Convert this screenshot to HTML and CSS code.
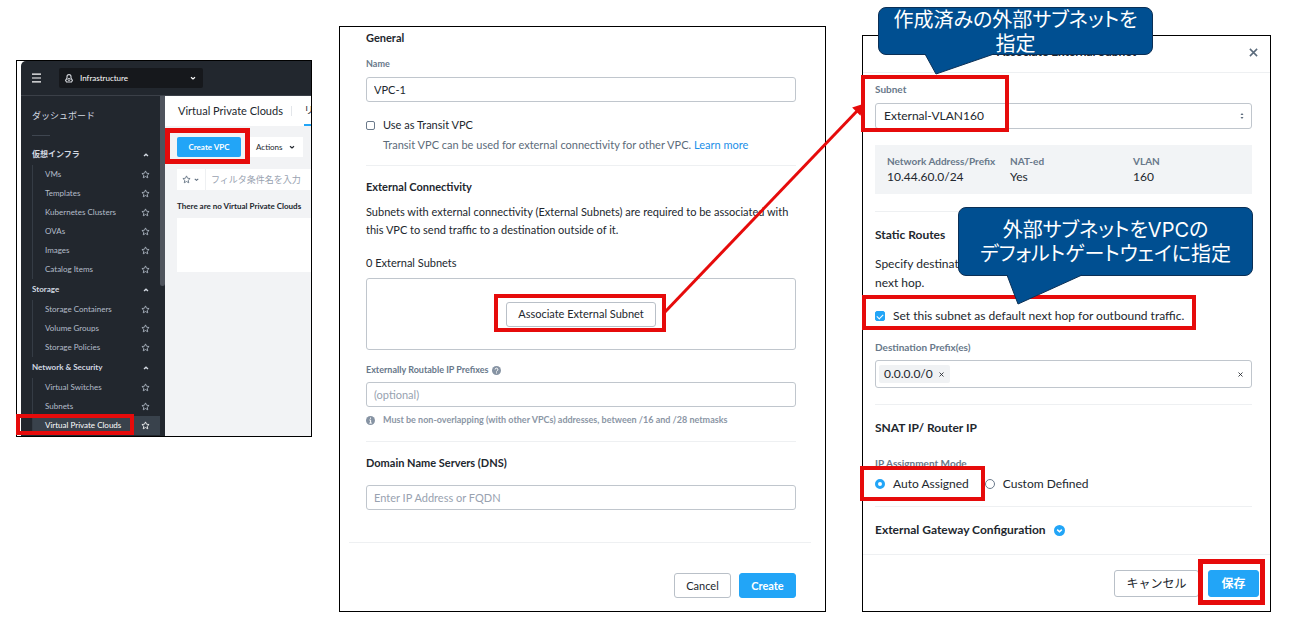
FILE: index.html
```html
<!DOCTYPE html>
<html lang="ja">
<head>
  <meta charset="UTF-8" />
  <meta name="viewport" content="width=device-width, initial-scale=1" />
  <title>VPC の作成手順</title>
  <link rel="stylesheet" href="styles.css">
</head>
<body>
  <svg width="0" height="0" class="sprite" aria-hidden="true">
    <symbol id="star" viewBox="0 0 12 12">
      <path d="M6 1.2 7.4 4.3 10.8 4.7 8.3 7 9 10.4 6 8.7 3 10.4 3.7 7 1.2 4.7 4.6 4.3Z" fill="none" stroke="currentColor" stroke-width="1.1" stroke-linejoin="round"/>
    </symbol>
    <symbol id="up" viewBox="0 0 8 8">
      <path d="M2 5 4 3.2 6 5" fill="none" stroke="currentColor" stroke-width="1.3"/>
    </symbol>
    <symbol id="down" viewBox="0 0 8 8">
      <path d="M2 3.2 4 5 6 3.2" fill="none" stroke="currentColor" stroke-width="1.2"/>
    </symbol>
    <symbol id="cross" viewBox="0 0 10 10">
      <path d="M1 1 9 9M9 1 1 9" fill="none" stroke="currentColor" stroke-width="1.7"/>
    </symbol>
  </svg>

  <main class="board">
    <!-- Step 1: VPC list -->
    <section class="panel panel-list">
      <div class="app">
        <header class="topbar">
          <button class="icon-btn" aria-label="メニュー">
            <svg width="10" height="10" viewBox="0 0 10 10"><path d="M0 1.2h9M0 5h9M0 8.8h9" stroke="#fff" stroke-width="1.2"/></svg>
          </button>
          <div class="app-switch">
            <svg width="8" height="9" viewBox="0 0 8 9"><path d="M2 4V2.6a2 2 0 0 1 4 0V4l1.4 2.4-.9 1.6h-5L.6 6.4Z" fill="none" stroke="#d5d8dd" stroke-width="1.1"/><circle cx="4" cy="5.4" r="1.1" fill="none" stroke="#d5d8dd"/></svg>
            <select aria-label="アプリ"><option>Infrastructure</option></select>
            <svg class="caret" width="8" height="8"><use href="#down"/></svg>
          </div>
        </header>
        <div class="app-body">
          <nav class="sidebar">
            <div class="side-in">
              <a class="dash" href="#">ダッシュボード</a>
              <hr>
              <h2>仮想インフラ <svg width="8" height="8"><use href="#up"/></svg></h2>
              <ul>
                <li><a href="#">VMs</a><svg width="9" height="9"><use href="#star"/></svg></li>
                <li><a href="#">Templates</a><svg width="9" height="9"><use href="#star"/></svg></li>
                <li><a href="#">Kubernetes Clusters</a><svg width="9" height="9"><use href="#star"/></svg></li>
                <li><a href="#">OVAs</a><svg width="9" height="9"><use href="#star"/></svg></li>
                <li><a href="#">Images</a><svg width="9" height="9"><use href="#star"/></svg></li>
                <li><a href="#">Catalog Items</a><svg width="9" height="9"><use href="#star"/></svg></li>
              </ul>
              <h2>Storage <svg width="8" height="8"><use href="#up"/></svg></h2>
              <ul>
                <li><a href="#">Storage Containers</a><svg width="9" height="9"><use href="#star"/></svg></li>
                <li><a href="#">Volume Groups</a><svg width="9" height="9"><use href="#star"/></svg></li>
                <li><a href="#">Storage Policies</a><svg width="9" height="9"><use href="#star"/></svg></li>
              </ul>
              <h2>Network &amp; Security <svg width="8" height="8"><use href="#up"/></svg></h2>
              <ul>
                <li><a href="#">Virtual Switches</a><svg width="9" height="9"><use href="#star"/></svg></li>
                <li><a href="#">Subnets</a><svg width="9" height="9"><use href="#star"/></svg></li>
                <li class="active"><a href="#">Virtual Private Clouds</a><svg width="9" height="9"><use href="#star"/></svg><span class="mark mark-menu"></span></li>
              </ul>
            </div>
            <div class="side-scroll"></div>
          </nav>
          <div class="list">
            <div class="list-head">
              <h1>Virtual Private Clouds</h1>
              <span class="sep"></span>
              <a class="tab" href="#">リ</a>
            </div>
            <div class="toolbar">
              <div class="target">
                <button class="btn-create">Create VPC</button>
                <span class="mark mark-create"></span>
              </div>
              <button class="btn-actions">Actions <svg width="8" height="8"><use href="#down"/></svg></button>
            </div>
            <div class="filter">
              <button class="filter-star" aria-label="保存済みフィルタ"><svg width="9" height="9"><use href="#star"/></svg><svg width="7" height="7"><use href="#down"/></svg></button>
              <input type="text" placeholder="フィルタ条件名を入力" aria-label="フィルタ">
            </div>
            <p class="empty-title">There are no Virtual Private Clouds</p>
            <div class="empty-box"></div>
          </div>
        </div>
      </div>
    </section>

    <!-- Step 2: create VPC form -->
    <section class="panel panel-form">
      <div class="form-body">
        <h3>General</h3>
        <label class="label" for="vpc-name">Name</label>
        <input class="input" id="vpc-name" type="text" value="VPC-1">
        <div class="check">
          <input type="checkbox" id="transit">
          <label for="transit">Use as Transit VPC</label>
        </div>
        <p class="note">Transit VPC can be used for external connectivity for other VPC. <a href="#">Learn more</a></p>
        <hr>
        <h3>External Connectivity</h3>
        <p class="text">Subnets with external connectivity (External Subnets) are required to be associated with<br>this VPC to send traffic to a destination outside of it.</p>
        <p class="count">0 External Subnets</p>
        <div class="subnet-box">
          <div class="target">
            <button class="btn btn-associate">Associate External Subnet</button>
            <span class="mark mark-associate"></span>
            <svg class="arrow" width="210" height="220" viewBox="0 0 210 220">
              <path d="M4 213 198 10" stroke="#e60b0b" stroke-width="3"/>
              <path d="M203 5 200 14 194 8Z" fill="#e60b0b" stroke="#e60b0b" stroke-width="2"/>
            </svg>
          </div>
        </div>
        <label class="label label-prefix" for="prefixes">Externally Routable IP Prefixes
          <svg width="9" height="9" viewBox="0 0 9 9"><circle cx="4.5" cy="4.5" r="4.5" fill="#8693a3"/><path d="M3.1 3.5a1.4 1.4 0 1 1 2 1.3q-.6.3-.6.8M4.5 6.4v1" fill="none" stroke="#fff"/></svg>
        </label>
        <input class="input" id="prefixes" type="text" placeholder="(optional)">
        <p class="hint">
          <svg width="9" height="9" viewBox="0 0 9 9"><circle cx="4.5" cy="4.5" r="4.5" fill="#8693a3"/><path d="M4.5 1.6v1.2M3.4 4h1.2v3M3.3 7.1h2.5" fill="none" stroke="#fff"/></svg>
          Must be non-overlapping (with other VPCs) addresses, between /16 and /28 netmasks
        </p>
        <hr>
        <h3><label for="dns">Domain Name Servers (DNS)</label></h3>
        <input class="input input-dns" id="dns" type="text" placeholder="Enter IP Address or FQDN">
      </div>
      <footer class="form-foot">
        <button class="btn">Cancel</button>
        <button class="btn btn-primary">Create</button>
      </footer>
    </section>

    <!-- Step 3: associate external subnet dialog -->
    <section class="panel panel-dialog">
      <header class="dialog-head">
        <h3>Associate External Subnet</h3>
        <button class="icon-btn close" aria-label="閉じる"><svg width="9" height="9"><use href="#cross"/></svg></button>
      </header>
      <div class="dialog-body">
        <div class="target field">
          <label class="label" for="subnet">Subnet</label>
          <div class="select">
            <select class="input" id="subnet"><option>External-VLAN160</option></select>
            <svg width="6" height="10" viewBox="0 0 6 10"><path d="M1.5 4 3 2 4.5 4ZM1.5 6 3 8 4.5 6Z" fill="#5b6b7c"/></svg>
          </div>
          <span class="mark mark-subnet"></span>
        </div>
        <dl class="info">
          <div><dt>Network Address/Prefix</dt><dd>10.44.60.0/24</dd></div>
          <div><dt>NAT-ed</dt><dd>Yes</dd></div>
          <div><dt>VLAN</dt><dd>160</dd></div>
        </dl>
        <hr>
        <h3>Static Routes</h3>
        <p class="text">Specify destination<br>next hop.</p>
        <div class="check target">
          <input type="checkbox" id="default-hop" checked>
          <label for="default-hop">Set this subnet as default next hop for outbound traffic.</label>
          <span class="mark mark-hop"></span>
        </div>
        <label class="label" for="dest">Destination Prefix(es)</label>
        <div class="tags">
          <span class="tag">0.0.0.0/0 <button class="icon-btn" aria-label="削除"><svg width="5" height="5"><use href="#cross"/></svg></button></span>
          <input type="text" id="dest">
          <button class="icon-btn" aria-label="クリア"><svg width="5" height="5"><use href="#cross"/></svg></button>
        </div>
        <hr>
        <h3>SNAT IP/ Router IP</h3>
        <p class="label label-mode" id="mode">IP Assignment Mode</p>
        <div class="radios" role="radiogroup" aria-labelledby="mode">
          <div class="radio target">
            <input type="radio" name="mode" id="auto" checked>
            <label for="auto">Auto Assigned</label>
            <span class="mark mark-auto"></span>
          </div>
          <div class="radio">
            <input type="radio" name="mode" id="custom">
            <label for="custom">Custom Defined</label>
          </div>
        </div>
        <hr>
        <h3 class="expand">External Gateway Configuration
          <button class="icon-btn" aria-label="展開"><svg width="11" height="11" viewBox="0 0 11 11"><circle cx="5.5" cy="5.5" r="5.5" fill="#22a5f7"/><path d="M3.2 4.6 5.5 6.8 7.8 4.6" fill="none" stroke="#fff" stroke-width="1.5"/></svg></button>
        </h3>
      </div>
      <footer class="dialog-foot">
        <button class="btn btn-cancel">キャンセル</button>
        <div class="target">
          <button class="btn btn-primary">保存</button>
          <span class="mark mark-save"></span>
        </div>
      </footer>

      <div class="callout callout-subnet">
        作成済みの外部サブネットを<br>指定
        <svg width="72" height="22" viewBox="0 0 72 22"><path d="M0 0 11 20 69 0" fill="#004f91" stroke="#0b2f55"/></svg>
      </div>
      <div class="callout callout-gateway">
        外部サブネットをVPCの<br>デフォルトゲートウェイに指定
        <svg width="78" height="32" viewBox="0 0 78 32"><path d="M0 0 11 29 75 0" fill="#004f91" stroke="#0b2f55"/></svg>
      </div>
    </section>
  </main>
</body>
</html>
```

FILE: styles.css
```css
* {
  box-sizing: border-box;
  margin: 0;
  padding: 0;
}

body {
  background: #fff;
  color: #22272e;
  font-family: Lato, "Noto Sans CJK JP", sans-serif;
  font-size: 11px;
  line-height: 16px;
}

button,
input,
select {
  font: inherit;
  color: inherit;
}

button {
  cursor: pointer;
  white-space: nowrap;
}

a {
  color: #1b8fe8;
  text-decoration: none;
}

svg {
  flex-shrink: 0;
}

hr {
  border: none;
  border-top: 1px solid #eef0f2;
}

ul {
  list-style: none;
}

h3 {
  font-size: inherit;
  font-weight: bold;
}

.sprite {
  position: absolute;
}

.board {
  display: grid;
  grid-template-columns: 296fr 514fr 445fr;
  align-items: start;
  padding: 26px 19px 6px 16px;
}

.panel {
  position: relative;
  min-width: 0;
  border: 1px solid #000;
  background: #fff;
}

.panel-list {
  margin-top: 34px;
}

.panel-form {
  margin-left: 27px;
}

.panel-dialog {
  margin: 9px 0 0 36px;
  font-size: 12px;
}

.target {
  position: relative;
}

.icon-btn {
  display: flex;
  border: none;
  background: none;
}

/* red frames around the things to click */
.mark {
  position: absolute;
  z-index: 2;
  border: 4px solid #e60b0b;
  pointer-events: none;
}

.mark-menu { left: -17px; top: -2px; width: 118px; height: 21px; }
.mark-create { inset: -9px -9px -7px -12px; border-width: 5px; }
.mark-associate { inset: -8px -10px -5px -12px; }
.mark-subnet { left: -14px; top: -7px; width: 148px; height: 57px; }
.mark-hop { left: -13px; top: -13px; width: 334px; height: 35px; }
.mark-auto { left: -15px; top: -10px; width: 125px; height: 35px; }
.mark-save { inset: -11px -6px -8px -10px; border-width: 5px; }

/* VPC list */
.app {
  margin-left: 4px;
  font-size: 8px;
}

.topbar {
  display: flex;
  align-items: center;
  gap: 17px;
  height: 35px;
  padding-left: 11px;
  border-bottom: 1px solid #3b4048;
  border-radius: 5px 0 0 0;
  background: #22272e;
}

.app-switch {
  position: relative;
  display: flex;
  align-items: center;
  gap: 7px;
  width: 144px;
  height: 20px;
  padding: 0 6px;
  border-radius: 2px;
  background: #16181c;
  color: #fff;
}

.app-switch select {
  flex: 1;
  border: none;
  appearance: none;
  background: transparent;
}

.app-body {
  display: flex;
}

.sidebar {
  display: flex;
  width: 144px;
  flex-shrink: 0;
  background: #22272e;
  color: #b4bdca;
}

.sidebar a {
  color: inherit;
}

.side-in {
  flex: 1;
  padding: 12px 0 1px 11px;
}

.side-in hr {
  width: 18px;
  margin: 11px 0 8px;
  border-color: #3f4650;
}

.side-in .dash {
  display: block;
  font-size: 9px;
  color: #d3d9e2;
}

.side-in h2 {
  display: flex;
  align-items: center;
  justify-content: space-between;
  padding-right: 10px;
  font-size: 8px;
  font-weight: bold;
  line-height: 21px;
  color: #d3d9e2;
}

.side-in ul {
  border-left: 1px solid #353c45;
}

.side-in li {
  position: relative;
  display: flex;
  align-items: center;
  justify-content: space-between;
  padding: 0 10px 0 12px;
  line-height: 19px;
}

.side-in li.active {
  background: #39424c;
  color: #fff;
}

.side-scroll {
  width: 5px;
  height: 190px;
  border-radius: 0 0 3px 3px;
  background: #4f545d;
}

.list {
  flex: 1;
  min-width: 0;
  background: #f2f3f5;
}

.list-head {
  display: flex;
  height: 30px;
  padding-left: 13px;
  overflow: hidden;
  background: #fff;
  white-space: nowrap;
}

.list-head h1 {
  font-size: 11px;
  font-weight: normal;
  line-height: 30px;
}

.sep {
  width: 1px;
  height: 10px;
  margin: 10px 12px 0 8px;
  flex-shrink: 0;
  background: #e3e6ea;
}

.tab {
  border-bottom: 2px solid #22a5f7;
  font-size: 10px;
  line-height: 28px;
  color: #22272e;
}

.toolbar {
  display: flex;
  gap: 8px;
  padding: 11px 7px 0 12px;
}

.btn-create {
  width: 64px;
  height: 20px;
  border: none;
  border-radius: 2px;
  background: #22a5f7;
  color: #fff;
  font-weight: bold;
}

.btn-actions {
  display: flex;
  align-items: center;
  gap: 5px;
  height: 20px;
  padding: 0 7px;
  border: none;
  background: #fff;
}

.filter {
  display: flex;
  height: 21px;
  margin: 12px 0 0 12px;
  background: #fff;
}

.filter-star {
  display: flex;
  align-items: center;
  gap: 2px;
  padding: 0 5px;
  border: none;
  border-right: 1px solid #eef0f2;
  background: none;
  color: #5b6b7c;
}

.filter input {
  flex: 1;
  min-width: 0;
  padding-left: 5px;
  border: none;
  background: none;
  font-size: 9px;
}

::placeholder {
  color: #98a2b0;
  opacity: 1;
}

.empty-title {
  margin: 8px 0 0 12px;
  font-weight: bold;
  white-space: nowrap;
}

.empty-box {
  height: 54px;
  margin: 4px 0 0 12px;
  background: #fff;
}

/* shared form parts */
.label {
  display: block;
  font-size: 9px;
  font-weight: bold;
  line-height: 14px;
  color: #68788a;
}

.input {
  display: block;
  width: 100%;
  height: 25px;
  padding: 0 7px;
  border: 1px solid #c0c6cd;
  border-radius: 3px;
  background: #fff;
}

.check,
.radio {
  display: flex;
  align-items: center;
  gap: 8px;
}

input[type="checkbox"],
input[type="radio"] {
  width: 9px;
  height: 9px;
  border: 1px solid #6b7a8b;
  border-radius: 2px;
  appearance: none;
  background: #fff;
}

input[type="radio"] {
  border-radius: 50%;
}

.panel-dialog input[type="checkbox"],
.panel-dialog input[type="radio"] {
  width: 10px;
  height: 10px;
}

.panel-dialog input[type="radio"]:checked {
  border: 3px solid #22a5f7;
}

input[type="checkbox"]:checked {
  border-color: #22a5f7;
  background: #22a5f7;
}

input[type="checkbox"]:checked::before {
  content: "";
  display: block;
  width: 5px;
  height: 3px;
  margin: 2px 0 0 1px;
  border-left: 1px solid #fff;
  border-bottom: 1px solid #fff;
  transform: rotate(-45deg);
}

.btn {
  height: 25px;
  padding: 0 11px;
  border: 1px solid #b9c0c8;
  border-radius: 3px;
  background: #fff;
}

.btn-primary {
  border-color: #22a5f7;
  background: #22a5f7;
  color: #fff;
  font-weight: bold;
}

/* create VPC form */
.form-body {
  padding: 3px 29px 32px 26px;
}

.form-body .label {
  margin: 11px 0 6px;
}

.form-body .check {
  margin: 15px 0 4px;
}

.note {
  padding-left: 17px;
  color: #5c6b7a;
}

.form-body hr {
  margin: 12px 0 13px;
}

.form-body .text {
  margin-top: 8px;
  line-height: 18px;
}

.count {
  margin: 16px 0 7px;
}

.subnet-box {
  display: flex;
  align-items: center;
  justify-content: center;
  height: 72px;
  border: 1px solid #c0c6cd;
  border-radius: 3px;
}

.btn-associate {
  width: 150px;
}

.arrow {
  position: absolute;
  left: 154px;
  top: -202px;
  z-index: 1;
  pointer-events: none;
}

.form-body .label-prefix {
  display: flex;
  align-items: center;
  gap: 4px;
  margin: 13px 0 5px;
}

.hint {
  display: flex;
  align-items: center;
  gap: 8px;
  margin: 6px 0 14px;
  font-size: 9px;
  font-weight: bold;
  line-height: 14px;
  color: #8b96a5;
}

.input-dns {
  margin-top: 14px;
}

.form-foot {
  display: flex;
  justify-content: flex-end;
  gap: 8px;
  margin: 0 14px 0 9px;
  padding: 30px 15px 13px 0;
  border-top: 1px solid #eef0f2;
}

.form-foot .btn {
  width: 57px;
  padding: 0;
}

/* associate external subnet dialog */
.dialog-head {
  position: relative;
  display: flex;
  align-items: center;
  justify-content: center;
  height: 37px;
  padding-bottom: 4px;
  border-bottom: 1px solid #eef0f2;
}

.close {
  position: absolute;
  right: 12px;
  color: #5b6b7c;
}

.dialog-body {
  padding: 9px 18px 16px 12px;
}

.dialog-body .label {
  font-size: 10px;
}

.select {
  position: relative;
  margin-top: 7px;
}

.select select {
  height: 26px;
  padding: 0 8px;
  appearance: none;
}

.select svg {
  position: absolute;
  right: 7px;
  top: 8px;
}

.info {
  display: grid;
  grid-template-columns: 123fr 123fr 119fr;
  margin: 16px 0 17px;
  padding: 8px 0 9px 12px;
  background: #f2f4f6;
}

.info dt {
  font-size: 10px;
  font-weight: bold;
  color: #68788a;
}

.dialog-body h3 {
  margin-top: 15px;
}

.dialog-body .text {
  margin: 11px 0 16px;
  line-height: 19px;
}

.dialog-body .check {
  margin-bottom: 16px;
}

.tags {
  display: flex;
  align-items: center;
  height: 28px;
  margin: 6px 0 16px;
  padding: 0 8px 0 3px;
  border: 1px solid #c0c6cd;
  border-radius: 3px;
  color: #22272e;
}

.tags input {
  flex: 1;
  min-width: 0;
  border: none;
}

.tag {
  display: flex;
  align-items: center;
  gap: 6px;
  padding: 1px 6px 1px 5px;
  border-radius: 2px;
  background: #f0f2f4;
}

.dialog-body .label-mode {
  margin-top: 20px;
}

.radios {
  display: flex;
  gap: 16px;
  margin: 6px 0 14px;
}

.expand {
  display: flex;
  align-items: center;
  gap: 8px;
}

.dialog-foot {
  display: flex;
  justify-content: flex-end;
  gap: 9px;
  padding: 15px 11px 14px;
  border-top: 1px solid #eef0f2;
}

.dialog-foot .btn {
  height: 27px;
}

.btn-cancel {
  width: 85px;
}

.dialog-foot .btn-primary {
  width: 51px;
}

/* explanation bubbles */
.callout {
  position: absolute;
  z-index: 3;
  border: 1px solid #0b2f55;
  border-radius: 8px;
  background: #004f91;
  color: #fff;
  font-family: Inter, "Noto Sans CJK JP", sans-serif;
  font-size: 20px;
  line-height: 24px;
  font-feature-settings: "palt";
  text-align: center;
  white-space: nowrap;
}

.callout svg {
  position: absolute;
  top: 100%;
  overflow: visible;
}

.callout-subnet {
  left: 15px;
  top: -29px;
  width: 275px;
  height: 48px;
}

.callout-subnet svg {
  left: 46px;
}

.callout-gateway {
  left: 95px;
  top: 171px;
  width: 295px;
  height: 69px;
  padding-top: 10px;
}

.callout-gateway svg {
  left: 48px;
}
```
